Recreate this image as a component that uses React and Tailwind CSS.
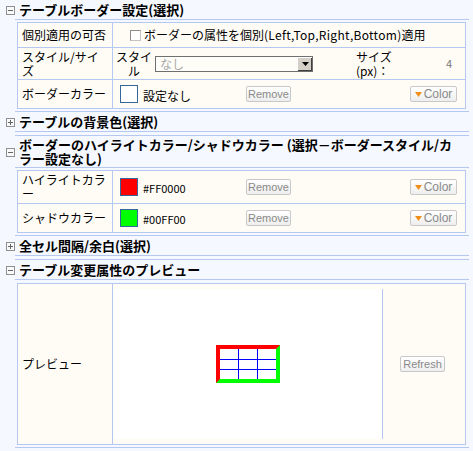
import React from "react";

const LINE = "border-[#b4c8f2]";
const CREAM = "bg-[#fffcf6]";

function Icon({ open }) {
  return (
    <svg width="9" height="9" viewBox="0 0 9 9" className="block">
      <rect x="0.5" y="0.5" width="8" height="8" fill="#fafafa" stroke="#8f8f8f" />
      <line x1="2" y1="4.5" x2="7" y2="4.5" stroke="#666" />
      {!open && <line x1="4.5" y1="2" x2="4.5" y2="7" stroke="#666" />}
    </svg>
  );
}

function Header({ open, children, two }) {
  return (
    <div className="flex items-center">
      <div className="w-[15px] shrink-0 pl-[6px]">
        <Icon open={open} />
      </div>
      <div
        className={`flex-1 border-b ${LINE} pl-[4px] ${two ? "pt-[2px] pb-[1px]" : "pt-[3px] pb-[2px]"} text-[13px] leading-[14px] font-bold text-black whitespace-nowrap`}
      >
        {children}
      </div>
    </div>
  );
}

function Btn({ children, w }) {
  return (
    <button
      type="button"
      className={`${w} h-[16px] shrink-0 flex items-center justify-center border border-[#c8c8c8] rounded-[2px] bg-gradient-to-b from-[#ffffff] to-[#eeeeee] text-[#8a8a8a] text-[11px] leading-[14px] font-['Liberation_Sans',sans-serif]`}
    >
      {children}
    </button>
  );
}

function ColorBtn() {
  return (
    <Btn w="w-[47px]">
      <svg width="7" height="5" viewBox="0 0 7 5" className="mr-[2px]">
        <polygon points="0,0 7,0 3.5,5" fill="#f0901a" />
      </svg>
      <span className="text-[12px]">Color</span>
    </Btn>
  );
}

function Row({ h, label, children, first }) {
  return (
    <div className={`flex ${h} ${first ? "" : `border-t ${LINE}`}`}>
      <div
        className={`w-[95px] shrink-0 border-r ${LINE} pl-[4px] flex items-center text-[12px] leading-[14px] whitespace-nowrap`}
      >
        {label}
      </div>
      <div className="flex-1 flex items-center">{children}</div>
    </div>
  );
}

function Swatch({ color }) {
  return (
    <div
      className="w-[18px] h-[18px] shrink-0 border border-[#35679c]"
      style={{ background: color }}
    />
  );
}

function ColorRow({ color, text }) {
  return (
    <>
      <div className="w-[133px] shrink-0 pl-[7px] flex items-center">
        <Swatch color={color} />
        <span className="ml-[5px] pt-[2px] text-[11px]">{text}</span>
      </div>
      <Btn w="w-[45px]">Remove</Btn>
      <div className="flex-1" />
      <div className="mr-[8px]">
        <ColorBtn />
      </div>
    </>
  );
}

export default function App() {
  return (
    <div className="w-[473px] min-h-[451px] bg-[#f5f8fe] pr-[4px] font-['Noto_Sans_CJK_JP','Liberation_Sans',sans-serif] text-black">
      {/* Section 1 */}
      <Header open>テーブルボーダー設定(選択)</Header>
      <div className={`ml-[15px] border-b ${LINE} pt-[2px] pb-[2px]`}>
        <div className={`ml-[2px] mr-[3px] border ${LINE} ${CREAM}`}>
          <Row first h="h-[24px]" label="個別適用の可否">
            <div className="pl-[17px] flex items-center">
              <span className="w-[11px] h-[11px] shrink-0 border border-[#8c8c8c] border-r-[#c4c4c4] border-b-[#c4c4c4] bg-white" />
              <span className="ml-[3px] text-[12px] leading-[14px] whitespace-nowrap">
                ボーダーの属性を個別
                <span className="tracking-[0.3px]">(Left,Top,Right,Bottom)</span>
                適用
              </span>
            </div>
          </Row>
          <Row h="h-[32px]" label={<span>スタイル/サイ<br />ズ</span>}>
            <div className="ml-[3px] w-[36px] shrink-0 text-center text-[12px] leading-[14px]">
              スタイ
              <br />ル
            </div>
            <div className="ml-[3px] w-[158px] h-[16px] shrink-0 flex border border-[#6f6f6f] bg-[#fffdf8]">
              <div className="flex-1 pl-[4px] text-[12px] leading-[14px] text-[#a8a8a8]">なし</div>
              <div className="w-[15px] h-full flex items-center justify-center bg-[#d4d0c8] border-l border-t border-l-[#ffffff] border-t-[#ffffff] shadow-[inset_-1px_-1px_0_#404040]">
                <svg width="7" height="4" viewBox="0 0 7 4">
                  <polygon points="0,0 7,0 3.5,4" fill="#000" />
                </svg>
              </div>
            </div>
            <div className="ml-[43px] text-[12px] leading-[14px] whitespace-nowrap">
              サイズ
              <br />
              (px)：
            </div>
            <div className="flex-1 text-right pr-[13px] text-[11px] text-[#777]">4</div>
          </Row>
          <Row h="h-[29px]" label="ボーダーカラー">
            <div className="w-[133px] shrink-0 pl-[7px] flex items-center">
              <Swatch color="#ffffff" />
              <span className="ml-[5px] pt-[3px] text-[12px]">設定なし</span>
            </div>
            <Btn w="w-[45px]">Remove</Btn>
            <div className="flex-1" />
            <div className="mr-[8px]">
              <ColorBtn />
            </div>
          </Row>
        </div>
      </div>

      {/* Section 2 */}
      <Header>テーブルの背景色(選択)</Header>
      <div className={`ml-[15px] h-[4px] border-b ${LINE}`} />

      {/* Section 3 */}
      <Header open two>
        ボーダーのハイライトカラー/シャドウカラー (選択－ボーダースタイル/カ
        <br />
        ラー設定なし)
      </Header>
      <div className={`ml-[15px] border-b ${LINE} pt-[2px] pb-[2px]`}>
        <div className={`ml-[2px] mr-[3px] border ${LINE} ${CREAM}`}>
          <Row first h="h-[32px]" label={<span>ハイライトカラ<br />ー</span>}>
            <ColorRow color="#ff0000" text="#FF0000" />
          </Row>
          <Row h="h-[29px]" label="シャドウカラー">
            <ColorRow color="#00ff00" text="#00FF00" />
          </Row>
        </div>
      </div>

      {/* Section 4 */}
      <Header>全セル間隔/余白(選択)</Header>
      <div className={`ml-[15px] h-[4px] border-b ${LINE}`} />

      {/* Section 5 */}
      <Header open>テーブル変更属性のプレビュー</Header>
      <div className={`ml-[15px] border-b ${LINE} pt-[3px] pb-[2px]`}>
        <div className={`ml-[2px] mr-[3px] border ${LINE} ${CREAM}`}>
          <div className="flex h-[160px]">
            <div className={`w-[95px] shrink-0 border-r ${LINE} pl-[4px] flex items-center text-[12px]`}>
              プレビュー
            </div>
            <div className="w-[270px] shrink-0 py-[5px]">
              <div className={`h-full bg-white border-r ${LINE} flex items-center justify-center`}>
                <div className="w-[64px] h-[38px] border-4 border-t-[#ff0000] border-l-[#ff0000] border-r-[#00ff00] border-b-[#00ff00] bg-white">
                  <svg width="56" height="30" viewBox="0 0 56 30" className="block">
                    <line x1="18.5" y1="0" x2="18.5" y2="30" stroke="#0000ff" />
                    <line x1="37.5" y1="0" x2="37.5" y2="30" stroke="#0000ff" />
                    <line x1="0" y1="10.5" x2="56" y2="10.5" stroke="#0000ff" />
                    <line x1="0" y1="20.5" x2="56" y2="20.5" stroke="#0000ff" />
                  </svg>
                </div>
              </div>
            </div>
            <div className="flex-1 flex items-center justify-center pr-[3px]">
              <Btn w="w-[45px]">Refresh</Btn>
            </div>
          </div>
        </div>
      </div>
    </div>
  );
}
